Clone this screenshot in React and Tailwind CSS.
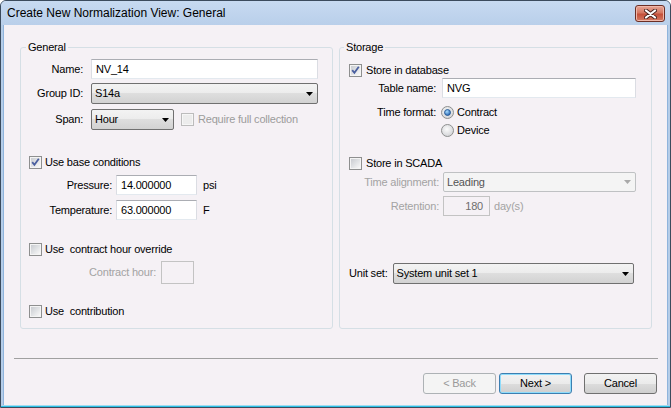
import React from "react";

const Check = ({ checked, disabled }) => (
    <span
        className={`relative flex h-[13px] w-[13px] shrink-0 border p-[1px] ${
            disabled ? "border-[#bcbcbc] bg-[#f6f6f6]" : "border-[#8e8f8f] bg-[#f4f4f4]"
        }`}
    >
        <span
            className={`flex-1 ${
                disabled ? "bg-[#ececec]" : "bg-[linear-gradient(135deg,#c9ccd1,#f8f8f8)]"
            }`}
        />
        {checked && (
            <svg className="absolute left-0 top-0" width="11" height="11" viewBox="0 0 11 11">
                <path d="M2.2 5.2 L4.4 7.8 L8.8 1.8" fill="none" stroke="#4a5f9f" strokeWidth="1.8" />
            </svg>
        )}
    </span>
);

const Radio = ({ on }) => (
    <svg width="13" height="13" viewBox="0 0 13 13" className="shrink-0">
        <defs>
            <radialGradient id="rbg" cx="45%" cy="40%" r="65%">
                <stop offset="0" stopColor="#fbfbfb" />
                <stop offset="1" stopColor="#cfd1d4" />
            </radialGradient>
            <radialGradient id="rdot" cx="40%" cy="35%" r="70%">
                <stop offset="0" stopColor="#a7dcff" />
                <stop offset="1" stopColor="#1b5bab" />
            </radialGradient>
        </defs>
        <circle cx="6.5" cy="6.5" r="6" fill="url(#rbg)" stroke="#8e8f8f" />
        {on && <circle cx="6.5" cy="6.5" r="3" fill="url(#rdot)" stroke="#22528d" strokeWidth="0.8" />}
    </svg>
);

const TextBox = ({ className, children, disabled }) => (
    <div
        className={`flex items-center border px-[4px] ${
            disabled
                ? "border-[#c3c3c3] bg-[#f5f1f5] text-[#6d6d6d]"
                : "border-[#abadb3] border-x-[#dbdde3] border-b-[#e3e9ef] bg-white"
        } ${className}`}
    >
        {children}
    </div>
);

const Combo = ({ className, children, disabled }) => (
    <div
        className={`flex items-center justify-between rounded-[2px] border pl-[3px] pr-[4px] ${
            disabled
                ? "border-[#bfc1c3] bg-[#f4f4f4] text-[#555]"
                : "border-[#707070] bg-[linear-gradient(#f3f3f3,#ececec_50%,#dedede_50%,#d2d2d2)]"
        } ${className}`}
    >
        <span>{children}</span>
        <svg width="7" height="4" viewBox="0 0 7 4">
            <path d="M0 0h7L3.5 4z" fill={disabled ? "#a9a9a9" : "#000"} />
        </svg>
    </div>
);

const Button = ({ children, variant }) => {
    const look =
        variant === "disabled"
            ? "border-[#adb2b5] bg-[#f4f4f4] text-[#9a9a9a]"
            : variant === "default"
            ? "border-[#3c7fb1] bg-[linear-gradient(#f2f2f2,#ebebeb_50%,#dddddd_50%,#cfcfcf)] shadow-[inset_0_0_0_1px_#8fdcfb]"
            : "border-[#707070] bg-[linear-gradient(#f2f2f2,#ebebeb_50%,#dddddd_50%,#cfcfcf)]";
    return (
        <div className={`flex h-[21px] w-[73px] items-center justify-center rounded-[3px] border ${look}`}>
            {children}
        </div>
    );
};

export default function App() {
    return (
        <div className="flex h-[408px] w-[671px] flex-col overflow-hidden rounded-t-[6px] border border-[#3b4b5d] bg-[#b5cde8] font-['Liberation_Sans',Arial,sans-serif] text-[11px] tracking-[-0.2px] text-black">
            {/* title bar */}
            <div className="flex h-[24px] shrink-0 items-start justify-between bg-[linear-gradient(#c7daf1,#b9cfea)] pl-[6px] pr-[5px]">
                <span className="mt-[5px] text-[12px] leading-[15px] tracking-normal">Create New Normalization View: General</span>
                <div className="mt-[4px] flex h-[17px] w-[30px] items-center justify-center rounded-[3px] border border-[#6b2e25] bg-[linear-gradient(#e6a596,#d57862_45%,#c4503a_55%,#d57a63)] shadow-[inset_0_0_0_1px_#efb8aa]">
                    <svg width="13" height="10" viewBox="0 0 13 10">
                        <path d="M2 1.5 L11 8.5 M11 1.5 L2 8.5" stroke="#4a2520" strokeWidth="4" strokeLinecap="round" />
                        <path d="M2 1.5 L11 8.5 M11 1.5 L2 8.5" stroke="#fff" strokeWidth="2.2" strokeLinecap="round" />
                    </svg>
                </div>
            </div>

            {/* client area */}
            <div className="mx-[2px] flex flex-1 flex-col bg-[#f5f1f5] shadow-[inset_1px_0_0_#8fb4dc,inset_-1px_0_0_#8fb4dc]">
                <div className="flex gap-[6px] pl-[17px] pr-[16px] pt-[16px]">
                    {/* General */}
                    <fieldset className="h-[288px] w-[313px] rounded-[3px] border border-[#d5dfe5]">
                        <legend className="ml-[5px] px-[2px] leading-[13px]">General</legend>
                        <div className="flex flex-col">
                            <div className="mt-[5px] flex items-center">
                                <span className="w-[62px] text-right">Name:</span>
                                <TextBox className="ml-[8px] h-[20px] w-[227px]">NV_14</TextBox>
                            </div>
                            <div className="mt-[4px] flex items-center">
                                <span className="w-[62px] text-right">Group ID:</span>
                                <Combo className="ml-[8px] h-[21px] w-[227px]">S14a</Combo>
                            </div>
                            <div className="mt-[5px] flex items-center">
                                <span className="w-[62px] text-right">Span:</span>
                                <Combo className="ml-[8px] h-[21px] w-[83px]">Hour</Combo>
                                <span className="ml-[7px] flex items-center gap-[4px] text-[#9c9c9c]">
                                    <Check disabled />
                                    Require full collection
                                </span>
                            </div>
                            <div className="ml-[8px] mt-[26px] flex h-[13px] items-center gap-[3px]">
                                <Check checked />
                                <span>Use base conditions</span>
                            </div>
                            <div className="mt-[6px] flex items-center">
                                <span className="w-[91px] text-right">Pressure:</span>
                                <TextBox className="ml-[4px] h-[20px] w-[81px]">14.000000</TextBox>
                                <span className="ml-[6px]">psi</span>
                            </div>
                            <div className="mt-[5px] flex items-center">
                                <span className="w-[91px] text-right">Temperature:</span>
                                <TextBox className="ml-[4px] h-[20px] w-[81px]">63.000000</TextBox>
                                <span className="ml-[6px]">F</span>
                            </div>
                            <div className="ml-[8px] mt-[23px] flex h-[13px] items-center gap-[3px]">
                                <Check />
                                <span>Use&nbsp; contract hour override</span>
                            </div>
                            <div className="mt-[5px] flex items-center">
                                <span className="w-[135px] text-right text-[#a3a3a3]">Contract hour:</span>
                                <TextBox disabled className="ml-[5px] h-[23px] w-[33px]" />
                            </div>
                            <div className="ml-[8px] mt-[21px] flex h-[13px] items-center gap-[3px]">
                                <Check />
                                <span>Use&nbsp; contribution</span>
                            </div>
                        </div>
                    </fieldset>

                    {/* Storage */}
                    <fieldset className="h-[288px] w-[313px] rounded-[3px] border border-[#d5dfe5]">
                        <legend className="ml-[4px] px-[2px] leading-[13px]">Storage</legend>
                        <div className="flex flex-col">
                            <div className="ml-[9px] mt-[10px] flex h-[13px] items-center gap-[4px]">
                                <Check checked />
                                <span>Store in database</span>
                            </div>
                            <div className="mt-[1px] flex items-center">
                                <span className="w-[96px] text-right">Table name:</span>
                                <TextBox className="ml-[6px] h-[20px] w-[194px]">NVG</TextBox>
                            </div>
                            <div className="mt-[8px] flex h-[13px] items-center">
                                <span className="w-[96px] text-right">Time format:</span>
                                <span className="ml-[5px] flex items-center gap-[3px]">
                                    <Radio on />
                                    Contract
                                </span>
                            </div>
                            <div className="mt-[5px] flex h-[13px] items-center">
                                <span className="ml-[101px] flex items-center gap-[3px]">
                                    <Radio />
                                    Device
                                </span>
                            </div>
                            <div className="ml-[9px] mt-[20px] flex h-[13px] items-center gap-[4px]">
                                <Check />
                                <span>Store in SCADA</span>
                            </div>
                            <div className="mt-[2px] flex items-center">
                                <span className="w-[99px] text-right text-[#a3a3a3]">Time alignment:</span>
                                <Combo disabled className="ml-[4px] h-[20px] w-[193px]">Leading</Combo>
                            </div>
                            <div className="mt-[4px] flex items-center">
                                <span className="w-[99px] text-right text-[#a3a3a3]">Retention:</span>
                                <TextBox disabled className="ml-[4px] h-[20px] w-[47px] justify-end pr-[6px]">180</TextBox>
                                <span className="ml-[4px] text-[#a3a3a3]">day(s)</span>
                            </div>
                            <div className="mt-[47px] flex items-center">
                                <span className="ml-[9px]">Unit set:</span>
                                <Combo className="ml-[5px] h-[21px] w-[241px]">System unit set 1</Combo>
                            </div>
                        </div>
                    </fieldset>
                </div>

                <div className="ml-[11px] mr-[10px] mt-[29px] h-[1px] bg-[#a0a0a0]" />

                <div className="mt-[14px] flex justify-end pr-[11px]">
                    <Button variant="disabled">&lt; Back</Button>
                    <div className="ml-[3px]">
                        <Button variant="default">Next &gt;</Button>
                    </div>
                    <div className="ml-[12px]">
                        <Button>Cancel</Button>
                    </div>
                </div>
            </div>
            <div className="mx-[2px] h-[1px] shrink-0 bg-[#a3dcf0]" />
            <div className="h-[1px] shrink-0 bg-[#2cc0e6]" />
        </div>
    );
}
